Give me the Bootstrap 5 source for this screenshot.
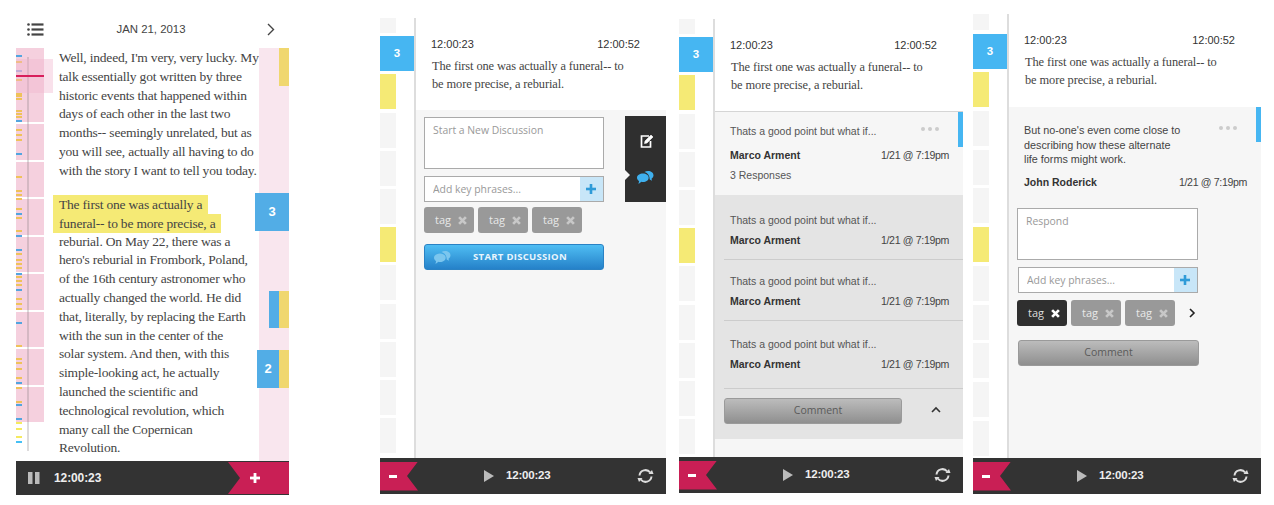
<!DOCTYPE html>
<html lang="en">
<head>
  <meta charset="UTF-8">
  <title>Transcript screens</title>
  <link href="https://cdn.jsdelivr.net/npm/bootstrap@5.3.1/dist/css/bootstrap.min.css" rel="stylesheet">
  <style>
    body { background: #fff; font-family: "Liberation Sans", Arial, sans-serif; overflow: hidden; }
    .stage { width: 1274px; height: 505px; }
    .phone { flex: none; }
    .phone-a { width: 273px; height: 480px; margin: 15px 0 0 16px; }
    .phone-b { width: 286px; height: 476px; margin: 18px 0 0 91px; }
    .phone-c { width: 284px; height: 474px; margin: 19px 0 0 13px; }
    .phone-d { width: 288px; height: 480px; margin: 14px 0 0 10px; }
    .phone-body { min-height: 0; }

    /* top of first screen */
    .date-bar { height: 33px; flex: none; padding: 0 14px 4px 11px; color: #444; font-size: 11.4px; }
    .date-bar span { margin-right: 9px; }
    .reading { min-height: 0; }
    .time-strip { width: 28px; flex: none; position: relative; }
    .time-band { background: #f5d0de; }
    .time-bands { gap: 2px; height: 374px; }
    .time-line { position: absolute; left: 11px; top: 9px; width: 2px; height: 394px; background: rgba(120, 110, 115, .25); }
    .time-view { position: absolute; left: 0; top: 11px; width: 37px; height: 34px; background: rgba(240, 180, 205, .4); }
    .time-now { position: absolute; left: 0; top: 27px; width: 28px; height: 2px; background: #d81f5c; }
    .time-tick { position: absolute; left: 0; width: 6px; height: 2px; }
    .serif-copy { font-family: "Liberation Serif", Georgia, serif; color: #444; white-space: nowrap; }
    .story { flex: 1; min-width: 0; padding: 1px 0 0 15px; font-size: 13.5px; letter-spacing: -.2px; line-height: 18.8px; }
    .story p { margin: 0 0 14px; }
    .story mark { display: inline-block; vertical-align: top; background: #f5ea75; color: #444; padding: 0 6px; margin: 0 0 0 -6px; height: 19px; line-height: 19px; }
    .note-rail { width: 30px; flex: none; position: relative; background: #f9e6ee; }
    .rail-mark { position: absolute; }
    .rail-blue { background: #52ade6; }
    .rail-yellow { background: #f0d76f; }
    .rail-num { color: #fff; font-size: 13px; font-weight: 700; }

    /* footer */
    .foot-bar { background: #333; color: #fff; flex: none; height: 36px; }
    .phone-a .foot-bar { height: 34px; }
    .foot-time { font-size: 11.5px; letter-spacing: -.2px; font-weight: 700; color: #eee; }
    .phone-a .foot-time { font-size: 12px; letter-spacing: -.1px; margin-left: 14px; }
    .pause-glyph { margin-left: 12px; }
    .ribbon { background: #c91f55; align-self: center; }
    .ribbon-r { width: 61px; height: 32px; margin-left: auto; clip-path: polygon(0 0, 100% 0, 100% 100%, 0 100%, 12px 50%); padding-left: 22px; }
    .ribbon-l { width: 38px; height: 29px; clip-path: polygon(0 0, 100% 0, 27px 50%, 100% 100%, 0 100%); padding-left: 9px; }
    .play-glyph { margin-left: 66px; margin-right: 12px; }
    .sync-glyph { margin-left: auto; margin-right: 12px; }

    /* left strip of the other screens */
    .clip-rail { width: 34px; flex: none; gap: 3.2px; overflow: hidden; }
    .phone-d .clip-rail { gap: 3.7px; }
    .clip-cell { width: 16px; height: 35px; flex: none; background: #f5f5f5; }
    .clip-top { height: 15px; }
    .phone-d .clip-top { height: 16px; }
    .clip-yellow { background: #f5ea75; }
    .clip-blue { width: 34px; background: #46b6f2; color: #fff; font-size: 11.5px; font-weight: 700; }
    .sheet { flex: 1; min-width: 0; border-left: 2px solid #ddd; }
    .sheet-head { height: 92px; padding: 19px 26px 0 15px; flex: none; }
    .phone-d .sheet-head { height: 93px; }
    .clip-time { font-size: 11px; color: #333; line-height: 14px; }
    .clip-quote { font-size: 12.4px; letter-spacing: -.1px; line-height: 18px; margin: 6px 0 0 1px; }
    .sheet-panel { flex: 1; background: #f6f6f6; position: relative; }

    /* form bits */
    .form-col { width: 180px; margin-left: 8px; padding-top: 7px; }
    .pale-area.form-control { height: 52px; border: 1px solid #aaa; border-radius: 0; padding: 5px 8px; font-family: "Open Sans", sans-serif; font-size: 10.4px; resize: none; box-shadow: none; background: #fff; }
    .pale-area.form-control::placeholder, .phrase-box .form-control::placeholder { color: #999; }
    .phrase-box { height: 26px; margin-top: 7px; border: 1px solid #aaa; flex-wrap: nowrap; }
    .phrase-box .form-control { height: 24px; min-height: 0; border: 0; border-radius: 0; padding: 0 8px; font-family: "Open Sans", sans-serif; font-size: 10.4px; }
    .phrase-plus { width: 24px; flex: none; background: #c8e6f8; }
    .chip-row { gap: 4px; margin-top: 5px; }
    .tag-chip { width: 50px; height: 26px; background: #999; border-radius: 3px; color: #e8e8e8; font-family: "Open Sans", sans-serif; font-size: 11px; padding: 0 7px 0 11px; }
    .tag-chip svg { width: 9px; height: 9px; }
    .tag-chip-on { background: #2f2f2f; color: #ddd; }
    .start-btn.btn { width: 180px; height: 26px; margin-top: 11px; padding: 0 0 0 12px; border: 1px solid #2a82c4; border-radius: 3px; background: linear-gradient(#4fbdf3, #2581c9); color: #e8f5fd; font-family: "Open Sans", sans-serif; font-size: 9.5px; font-weight: 700; letter-spacing: .3px; position: relative; }
    .start-btn svg { position: absolute; left: 9px; top: 5px; }
    .comment-btn.btn { height: 26px; padding: 0; border: 1px solid #9a9a9a; border-radius: 3px; background: linear-gradient(#bcbcbc, #8f8f8f); color: #5a5a5a; font-family: "Open Sans", sans-serif; font-size: 10.5px; }
    .comment-btn-wide.btn { width: 178px; padding-left: 10px; }
    .side-tabs { position: absolute; right: 0; top: 6px; width: 41px; height: 86px; background: #2f2f2f; }
    .side-tabs::before { content: ""; position: absolute; left: 0; top: 54px; border: 5px solid transparent; border-left-color: #f6f6f6; }
    .tab-edit { position: absolute; left: 15px; top: 18px; }
    .tab-talk { position: absolute; left: 12px; top: 54px; }

    /* discussion list */
    .disc-list { flex: none; }
    .disc-list .list-group-item { background: #e4e4e4; border: 0; border-radius: 0; padding: 0 14px 0 15px; position: relative; color: #555; font-size: 10.5px; }
    .disc-list .disc-open { background: #f6f6f6; height: 83px; padding-top: 12px; }
    .disc-line { line-height: 14px; white-space: nowrap; }
    .disc-meta { margin-top: 6px; }
    .disc-open .disc-meta { margin-top: 10px; }
    .disc-sub { margin-top: 6px; }
    .disc-who { font-weight: 700; color: #333; font-size: 10.5px; }
    .disc-when { color: #444; font-size: 10.6px; letter-spacing: -.35px; }
    .disc-rule { position: absolute; left: 9px; right: 0; bottom: 0; height: 1px; background: #ccc; }
    .disc-b { height: 65px; padding-top: 18px !important; }
    .disc-c { height: 61px; padding-top: 14px !important; }
    .disc-d { height: 68px; padding-top: 16px !important; }
    .blue-flag { position: absolute; right: 0; top: 0; width: 5px; height: 35px; background: #46b6f2; }
    .more-dots { position: absolute; top: 15px; right: 24px; width: 18px; height: 5px; display: flex; justify-content: space-between; }
    .more-dots i { width: 4px; height: 4px; border-radius: 50%; background: #ccc; }
    .reply-open .more-dots { top: 19px; }
    .disc-foot { background: #e4e4e4; height: 50px; padding: 9px 0 0 9px; flex: none; }
    .disc-up { margin: 8px 0 0 29px; }
    .sheet-line { border-top: 1px solid #d5d5d5; }
    .reply-open { padding: 16px 14px 0 15px; font-size: 10.8px; color: #444; position: relative; }
    .reply-open .disc-line { line-height: 14.5px; }
    .reply-open .disc-meta { margin-top: 8px; }
    .reply-form { width: 181px; margin: 19px 0 0 8px; }
    .reply-form .phrase-box { margin: 7px 0 0 1px; width: 180px; }
    .reply-form .chip-row { margin-top: 7px; }
    .reply-more { margin-left: 10px; }
    .reply-form .comment-btn { width: 181px; margin: 14px 0 0 1px; }
  </style>
</head>
<body>
  <div class="stage d-flex align-items-start">

    <!-- screen 1: reading -->
    <div class="phone phone-a d-flex flex-column">
      <div class="date-bar d-flex justify-content-between align-items-center">
        <svg width="17" height="13" viewBox="0 0 17 13" fill="#444"><circle cx="1.5" cy="1.5" r="1.3"/><circle cx="1.5" cy="6.5" r="1.3"/><circle cx="1.5" cy="11.5" r="1.3"/><rect x="4.5" y=".4" width="12" height="2.2"/><rect x="4.5" y="5.4" width="12" height="2.2"/><rect x="4.5" y="10.4" width="12" height="2.2"/></svg>
        <span>JAN 21, 2013</span>
        <svg width="8" height="13" viewBox="0 0 8 13" fill="none" stroke="#444" stroke-width="1.4"><path d="M1 1l5.500 5.500L1 12"/></svg>
      </div>
      <div class="reading d-flex flex-grow-1">
        <div class="time-strip">
          <div class="time-bands d-flex flex-column" id="timeBands"></div>
          <div id="timeTicks"></div>
          <div class="time-line"></div>
          <div class="time-view"></div>
          <div class="time-now"></div>
        </div>
        <div class="story serif-copy">
          <p>Well, indeed, I'm very, very lucky. My<br>talk essentially got written by three<br>historic events that happened within<br>days of each other in the last two<br>months-- seemingly unrelated, but as<br>you will see, actually all having to do<br>with the story I want to tell you today.</p>
          <p><mark>The first one was actually a</mark><br><mark>funeral-- to be more precise, a</mark><br>reburial. On May 22, there was a<br>hero's reburial in Frombork, Poland,<br>of the 16th century astronomer who<br>actually changed the world. He did<br>that, literally, by replacing the Earth<br>with the sun in the center of the<br>solar system. And then, with this<br>simple-looking act, he actually<br>launched the scientific and<br>technological revolution, which<br>many call the Copernican<br>Revolution.</p>
        </div>
        <div class="note-rail">
          <div class="rail-mark rail-yellow" id="railA"></div>
          <div class="rail-mark rail-blue rail-num d-flex align-items-center justify-content-center" id="railB">3</div>
          <div class="rail-mark rail-blue" id="railC"></div>
          <div class="rail-mark rail-yellow" id="railD"></div>
          <div class="rail-mark rail-blue rail-num d-flex align-items-center justify-content-center" id="railE">2</div>
          <div class="rail-mark rail-yellow" id="railF"></div>
        </div>
      </div>
      <div class="foot-bar d-flex align-items-center">
        <svg class="pause-glyph" width="12" height="12" viewBox="0 0 12 12" fill="#bbb"><rect x="0" y="0" width="4.500" height="12"/><rect x="7" y="0" width="4.500" height="12"/></svg>
        <span class="foot-time">12:00:23</span>
        <div class="ribbon ribbon-r d-flex align-items-center">
          <svg width="10" height="10" viewBox="0 0 10 10" fill="#fff"><rect x="3.600" y="0" width="2.800" height="10"/><rect x="0" y="3.600" width="10" height="2.800"/></svg>
        </div>
      </div>
    </div>

    <!-- screen 2: new discussion -->
    <div class="phone phone-b d-flex flex-column">
      <div class="phone-body d-flex flex-grow-1">
        <div class="clip-rail d-flex flex-column" data-clip></div>
        <div class="sheet d-flex flex-column">
          <div class="sheet-head">
            <div class="clip-time d-flex justify-content-between"><span>12:00:23</span><span>12:00:52</span></div>
            <div class="clip-quote serif-copy">The first one was actually a funeral-- to<br>be more precise, a reburial.</div>
          </div>
          <div class="sheet-panel">
            <div class="form-col">
              <textarea class="form-control pale-area" placeholder="Start a New Discussion"></textarea>
              <div class="input-group phrase-box">
                <input class="form-control" placeholder="Add key phrases...">
                <div class="phrase-plus d-flex align-items-center justify-content-center"><svg width="10" height="10" viewBox="0 0 10 10" fill="#2f9bd8"><rect x="3.700" y="0" width="2.600" height="10"/><rect x="0" y="3.700" width="10" height="2.600"/></svg></div>
              </div>
              <div class="chip-row d-flex">
                <div class="tag-chip d-flex align-items-center justify-content-between"><span>tag</span><svg viewBox="0 0 8 8" stroke="#c8c8c8" stroke-width="2.400"><path d="M1 1l6 6M7 1l-6 6"/></svg></div>
                <div class="tag-chip d-flex align-items-center justify-content-between"><span>tag</span><svg viewBox="0 0 8 8" stroke="#c8c8c8" stroke-width="2.400"><path d="M1 1l6 6M7 1l-6 6"/></svg></div>
                <div class="tag-chip d-flex align-items-center justify-content-between"><span>tag</span><svg viewBox="0 0 8 8" stroke="#c8c8c8" stroke-width="2.400"><path d="M1 1l6 6M7 1l-6 6"/></svg></div>
              </div>
              <button class="btn start-btn" type="button">
                <svg width="17" height="15" viewBox="0 0 17 15" fill="#7cc6ee"><path d="M11 1c3 0 5.500 1.800 5.500 4.300 0 1.400-.8 2.600-2 3.400l.5 2-2.300-1.300C12.700 6 11 3 7.500 2 8.400 1.300 9.600 1 11 1z"/><path d="M6 3.500c3.200 0 5.700 1.800 5.700 4.200S9.200 12 6 12c-.6 0-1.100-.1-1.600-.2L1.500 14l.6-3C.8 10.200 0 9 0 7.700 0 5.300 2.800 3.500 6 3.500z"/></svg>
                START DISCUSSION
              </button>
            </div>
            <div class="side-tabs">
              <svg class="tab-edit" width="14" height="14" viewBox="0 0 14 14" fill="none" stroke="#fff" stroke-width="1.700"><path d="M9 2H1.500v11h9V7"/><path d="M4.500 9.500l.5-2.500 6-6 2 2-6 6z" fill="#fff" stroke-width=".6"/></svg>
              <svg class="tab-talk" width="17" height="15" viewBox="0 0 17 15" fill="#3fb0ee"><path d="M11 1c3 0 5.500 1.800 5.500 4.300 0 1.400-.8 2.600-2 3.400l.5 2-2.300-1.300C12.700 6 11 3 7.500 2 8.400 1.300 9.600 1 11 1z"/><path d="M6 3.500c3.200 0 5.700 1.800 5.700 4.200S9.200 12 6 12c-.6 0-1.100-.1-1.600-.2L1.500 14l.6-3C.8 10.200 0 9 0 7.700 0 5.300 2.800 3.500 6 3.500z"/></svg>
            </div>
          </div>
        </div>
      </div>
      <div class="foot-bar d-flex align-items-center">
        <div class="ribbon ribbon-l d-flex align-items-center"><svg width="8" height="3" viewBox="0 0 8 3" fill="#fff"><rect width="8" height="3"/></svg></div>
        <svg class="play-glyph" width="10" height="12" viewBox="0 0 10 12" fill="#bbb"><path d="M0 0l10 6-10 6z"/></svg>
        <span class="foot-time">12:00:23</span>
        <svg class="sync-glyph" width="17" height="16" viewBox="0 0 17 16" fill="none" stroke="#ddd" stroke-width="2"><path d="M2.500 7.500A6 6 0 0 1 13.200 4.500"/><path d="M14.500 8.500A6 6 0 0 1 3.800 11.500"/><path d="M11.500 6h5l-1.500-4z" fill="#ddd" stroke="none"/><path d="M5.500 10H.5l1.500 4z" fill="#ddd" stroke="none"/></svg>
      </div>
    </div>

    <!-- screen 3: discussion list -->
    <div class="phone phone-c d-flex flex-column">
      <div class="phone-body d-flex flex-grow-1">
        <div class="clip-rail d-flex flex-column" data-clip></div>
        <div class="sheet d-flex flex-column">
          <div class="sheet-head">
            <div class="clip-time d-flex justify-content-between"><span>12:00:23</span><span>12:00:52</span></div>
            <div class="clip-quote serif-copy">The first one was actually a funeral-- to<br>be more precise, a reburial.</div>
          </div>
          <div class="sheet-panel d-flex flex-column sheet-line">
            <div class="list-group disc-list">
              <div class="list-group-item disc-open">
                <div class="blue-flag"></div>
                <div class="more-dots"><i></i><i></i><i></i></div>
                <div class="disc-line">Thats a good point but what if...</div>
                <div class="disc-line disc-meta d-flex justify-content-between"><span class="disc-who">Marco Arment</span><span class="disc-when">1/21 @ 7:19pm</span></div>
                <div class="disc-line disc-sub">3 Responses</div>
              </div>
              <div class="list-group-item disc-b">
                <div class="disc-line">Thats a good point but what if...</div>
                <div class="disc-line disc-meta d-flex justify-content-between"><span class="disc-who">Marco Arment</span><span class="disc-when">1/21 @ 7:19pm</span></div>
                <div class="disc-rule"></div>
              </div>
              <div class="list-group-item disc-c">
                <div class="disc-line">Thats a good point but what if...</div>
                <div class="disc-line disc-meta d-flex justify-content-between"><span class="disc-who">Marco Arment</span><span class="disc-when">1/21 @ 7:19pm</span></div>
                <div class="disc-rule"></div>
              </div>
              <div class="list-group-item disc-d">
                <div class="disc-line">Thats a good point but what if...</div>
                <div class="disc-line disc-meta d-flex justify-content-between"><span class="disc-who">Marco Arment</span><span class="disc-when">1/21 @ 7:19pm</span></div>
                <div class="disc-rule"></div>
              </div>
            </div>
            <div class="disc-foot d-flex align-items-start">
              <button class="btn comment-btn comment-btn-wide" type="button">Comment</button>
              <svg class="disc-up" width="10" height="7" viewBox="0 0 10 7" fill="none" stroke="#333" stroke-width="1.600"><path d="M1 6l4-4 4 4"/></svg>
            </div>
          </div>
        </div>
      </div>
      <div class="foot-bar d-flex align-items-center">
        <div class="ribbon ribbon-l d-flex align-items-center"><svg width="8" height="3" viewBox="0 0 8 3" fill="#fff"><rect width="8" height="3"/></svg></div>
        <svg class="play-glyph" width="10" height="12" viewBox="0 0 10 12" fill="#bbb"><path d="M0 0l10 6-10 6z"/></svg>
        <span class="foot-time">12:00:23</span>
        <svg class="sync-glyph" width="17" height="16" viewBox="0 0 17 16" fill="none" stroke="#ddd" stroke-width="2"><path d="M2.500 7.500A6 6 0 0 1 13.200 4.500"/><path d="M14.500 8.500A6 6 0 0 1 3.800 11.500"/><path d="M11.500 6h5l-1.500-4z" fill="#ddd" stroke="none"/><path d="M5.500 10H.5l1.500 4z" fill="#ddd" stroke="none"/></svg>
      </div>
    </div>

    <!-- screen 4: respond -->
    <div class="phone phone-d d-flex flex-column">
      <div class="phone-body d-flex flex-grow-1">
        <div class="clip-rail d-flex flex-column" data-clip></div>
        <div class="sheet d-flex flex-column">
          <div class="sheet-head">
            <div class="clip-time d-flex justify-content-between"><span>12:00:23</span><span>12:00:52</span></div>
            <div class="clip-quote serif-copy">The first one was actually a funeral-- to<br>be more precise, a reburial.</div>
          </div>
          <div class="sheet-panel">
            <div class="reply-open">
              <div class="blue-flag"></div>
              <div class="more-dots"><i></i><i></i><i></i></div>
              <div class="disc-line">But no-one's even come close to<br>describing how these alternate<br>life forms might work.</div>
              <div class="disc-line disc-meta d-flex justify-content-between"><span class="disc-who">John Roderick</span><span class="disc-when">1/21 @ 7:19pm</span></div>
            </div>
            <div class="reply-form">
              <textarea class="form-control pale-area" placeholder="Respond"></textarea>
              <div class="input-group phrase-box">
                <input class="form-control" placeholder="Add key phrases...">
                <div class="phrase-plus d-flex align-items-center justify-content-center"><svg width="10" height="10" viewBox="0 0 10 10" fill="#2f9bd8"><rect x="3.700" y="0" width="2.600" height="10"/><rect x="0" y="3.700" width="10" height="2.600"/></svg></div>
              </div>
              <div class="chip-row d-flex align-items-center">
                <div class="tag-chip tag-chip-on d-flex align-items-center justify-content-between"><span>tag</span><svg viewBox="0 0 8 8" stroke="#fff" stroke-width="2.400"><path d="M1 1l6 6M7 1l-6 6"/></svg></div>
                <div class="tag-chip d-flex align-items-center justify-content-between"><span>tag</span><svg viewBox="0 0 8 8" stroke="#c8c8c8" stroke-width="2.400"><path d="M1 1l6 6M7 1l-6 6"/></svg></div>
                <div class="tag-chip d-flex align-items-center justify-content-between"><span>tag</span><svg viewBox="0 0 8 8" stroke="#c8c8c8" stroke-width="2.400"><path d="M1 1l6 6M7 1l-6 6"/></svg></div>
                <svg class="reply-more" width="7" height="10" viewBox="0 0 7 10" fill="none" stroke="#222" stroke-width="1.600"><path d="M1 1l4 4-4 4"/></svg>
              </div>
              <button class="btn comment-btn" type="button">Comment</button>
            </div>
          </div>
        </div>
      </div>
      <div class="foot-bar d-flex align-items-center">
        <div class="ribbon ribbon-l d-flex align-items-center"><svg width="8" height="3" viewBox="0 0 8 3" fill="#fff"><rect width="8" height="3"/></svg></div>
        <svg class="play-glyph" width="10" height="12" viewBox="0 0 10 12" fill="#bbb"><path d="M0 0l10 6-10 6z"/></svg>
        <span class="foot-time">12:00:23</span>
        <svg class="sync-glyph" width="17" height="16" viewBox="0 0 17 16" fill="none" stroke="#ddd" stroke-width="2"><path d="M2.500 7.500A6 6 0 0 1 13.200 4.500"/><path d="M14.500 8.500A6 6 0 0 1 3.800 11.500"/><path d="M11.500 6h5l-1.500-4z" fill="#ddd" stroke="none"/><path d="M5.500 10H.5l1.500 4z" fill="#ddd" stroke="none"/></svg>
      </div>
    </div>
  </div>

  <script src="https://cdn.jsdelivr.net/npm/bootstrap@5.3.1/dist/js/bootstrap.bundle.min.js"></script>
  <script>
    // pink bands of the left timeline
    const bands = document.getElementById('timeBands');
    [74, 35.5, 35.5, 35.5, 35.5, 35.5, 35.5, 35.5, 35].forEach(h => {
      const d = document.createElement('div');
      d.className = 'time-band';
      d.style.height = h + 'px';
      bands.appendChild(d);
    });

    // ticks: y on the page, colour key
    const tickColors = { o: '#efc25a', b: '#52a5e0', p: '#a6a6dc', y: '#f5ea60', l: '#46c0f5' };
    const ticks = [[55,'b'],[61,'o'],[70,'p'],[79,'o'],[93,'o'],[95,'o'],[98,'o'],[110,'o'],[113,'o'],[116,'o'],[120,'b'],
      [129,'o'],[134,'o'],[139,'o'],[153,'b'],[176,'o'],[190,'o'],[194,'o'],[198,'o'],[208,'o'],[213,'b'],[217,'o'],[230,'o'],[235,'b'],
      [249,'b'],[253,'o'],[259,'o'],[263,'o'],[267,'o'],[273,'b'],[276,'o'],[280,'o'],[284,'o'],[289,'b'],[298,'o'],[303,'o'],[308,'o'],
      [322,'b'],[345,'o'],[358,'o'],[362,'o'],[368,'o'],[377,'o'],[382,'b'],[387,'o'],[401,'o'],[404,'b'],[418,'b'],[422,'y'],[428,'y'],[436,'y'],[441,'l']];
    const tickBox = document.getElementById('timeTicks');
    ticks.forEach(([y, c]) => {
      const t = document.createElement('div');
      t.className = 'time-tick';
      t.style.top = (y - 48) + 'px';
      t.style.background = tickColors[c];
      tickBox.appendChild(t);
    });

    // marks on the right rail: left, top, width, height inside the rail
    const railMarks = { railA: [20, 0, 10, 38], railB: [-4, 145, 34, 38], railC: [10, 243, 10, 37], railD: [20, 243, 10, 37], railE: [-2, 302, 22, 38], railF: [20, 302, 10, 38] };
    Object.keys(railMarks).forEach(id => {
      const [l, t, w, h] = railMarks[id];
      const el = document.getElementById(id);
      el.style.left = l + 'px';
      el.style.top = t + 'px';
      el.style.width = w + 'px';
      el.style.height = h + 'px';
    });

    // strip of clips on screens 2-4
    const clipKinds = ['top', 'blue', 'yellow', '', '', '', 'yellow', '', '', '', '', ''];
    document.querySelectorAll('[data-clip]').forEach(rail => {
      clipKinds.forEach(kind => {
        const c = document.createElement('div');
        c.className = 'clip-cell' + (kind ? ' clip-' + kind : '');
        if (kind === 'blue') {
          c.className += ' d-flex align-items-center justify-content-center';
          c.innerText = '3';
        }
        rail.appendChild(c);
      });
    });
  </script>
</body>
</html>
